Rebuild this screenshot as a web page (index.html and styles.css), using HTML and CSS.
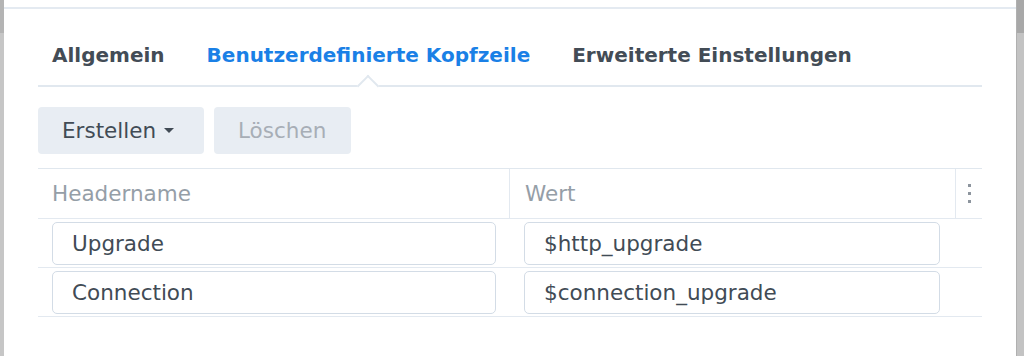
FILE: index.html
```html
<!DOCTYPE html>
<html lang="de">
<head>
<meta charset="utf-8">
<title>Benutzerdefinierte Kopfzeile</title>
<link rel="stylesheet" href="styles.css">
</head>
<body>
<div class="page">
  <div class="edge edge-left"><div class="edge-top"></div></div>
  <div class="dialog">
    <div class="dlg-head"></div>
    <div class="dlg-body">
      <nav class="tabs">
        <div class="tab">Allgemein</div>
        <div class="tab active">Benutzerdefinierte Kopfzeile<span class="notch"></span></div>
        <div class="tab">Erweiterte Einstellungen</div>
      </nav>
      <div class="toolbar">
        <button class="btn btn-drop">Erstellen<span class="caret"></span></button>
        <button class="btn btn-disabled">Löschen</button>
      </div>
      <div class="grid">
        <div class="row head">
          <div class="cell c1">Headername</div>
          <div class="cell c2">Wert</div>
          <div class="cell c3"><span class="kebab"><i></i><i></i><i></i></span></div>
        </div>
        <div class="row">
          <div class="cell c1"><div class="input">Upgrade</div></div>
          <div class="cell c2"><div class="input">$http_upgrade</div></div>
          <div class="cell c3 plain"></div>
        </div>
        <div class="row">
          <div class="cell c1"><div class="input">Connection</div></div>
          <div class="cell c2"><div class="input">$connection_upgrade</div></div>
          <div class="cell c3 plain"></div>
        </div>
      </div>
    </div>
  </div>
  <div class="edge edge-right"><div class="edge-top"></div></div>
</div>
</body>
</html>
```

FILE: styles.css
```css
html, body {
  margin: 0;
  padding: 0;
}
body {
  background: #c8c8c8;
  font-family: "DejaVu Sans", Verdana, sans-serif;
  color: #414b55;
  overflow: hidden;
}
.page {
  display: flex;
  height: 356px;
}
.edge {
  background: #c6c6c6;
}
.edge-top {
  height: 33px;
  background: #b4b4b4;
}
.edge-left {
  width: 4px;
}
.edge-right {
  width: 7px;
  border-left: 1px solid #b0b0b0;
  background: #c3c3c3;
}
.edge-right .edge-top {
  background: #a8a8a8;
}
.dialog {
  flex: 1;
  background: #fff;
}
.dlg-head {
  height: 7px;
  border-bottom: 2px solid #e4eaf1;
}
.dlg-body {
  padding: 0 34px;
}
.tabs {
  display: flex;
  gap: 42px;
  padding: 34px 0 0 14px;
  height: 42px;
  border-bottom: 2px solid #e1e8ef;
}
.tab {
  position: relative;
  font-size: 20px;
  font-weight: bold;
  line-height: 24px;
  color: #434c56;
}
.tab.active {
  color: #1a80e6;
}
.notch {
  position: absolute;
  left: 50%;
  top: 35px;
  width: 14px;
  height: 14px;
  margin-left: -8px;
  background: #fff;
  border-top: 2px solid #e1e8ef;
  border-left: 2px solid #e1e8ef;
  transform: rotate(45deg);
}
.toolbar {
  display: flex;
  gap: 10px;
  margin-top: 20px;
}
.btn {
  height: 47px;
  border: 0;
  border-radius: 4px;
  background: #e8edf3;
  font-family: inherit;
  font-size: 21.5px;
  color: #414b55;
  padding: 0 24px;
  display: flex;
  align-items: center;
}
.btn-drop {
  width: 166px;
}
.caret {
  width: 0;
  height: 0;
  margin-left: 8px;
  border-left: 5.5px solid transparent;
  border-right: 5.5px solid transparent;
  border-top: 5px solid #414b55;
}
.btn-disabled {
  width: 137px;
  color: #a7aeb6;
}
.grid {
  margin-top: 14px;
  border-top: 1px solid #e0e7ee;
}
.row {
  display: flex;
  height: 48px;
  border-bottom: 1px solid #e3e9f0;
}
.row.head {
  height: 49px;
}
.cell {
  display: flex;
  align-items: center;
}
.c1 {
  width: 471px;
  padding: 0 13px 0 14px;
  box-sizing: border-box;
}
.c2 {
  width: 446px;
  padding: 0 15px;
  box-sizing: border-box;
}
.head .c2 {
  border-left: 1px solid #e3e9f0;
  padding-left: 15px;
}
.c3 {
  flex: 1;
  justify-content: center;
}
.head .c3 {
  border-left: 1px solid #e3e9f0;
}
.head .cell {
  font-size: 21.5px;
  color: #959ea7;
}
.input {
  flex: 1;
  height: 43px;
  box-sizing: border-box;
  border: 1px solid #d3dce6;
  border-radius: 5px;
  padding-left: 19px;
  display: flex;
  align-items: center;
  font-size: 21.5px;
  color: #414b55;
}
.kebab {
  display: flex;
  flex-direction: column;
  gap: 5px;
}
.kebab i {
  display: block;
  width: 3px;
  height: 3px;
  background: #8d959e;
}
```
